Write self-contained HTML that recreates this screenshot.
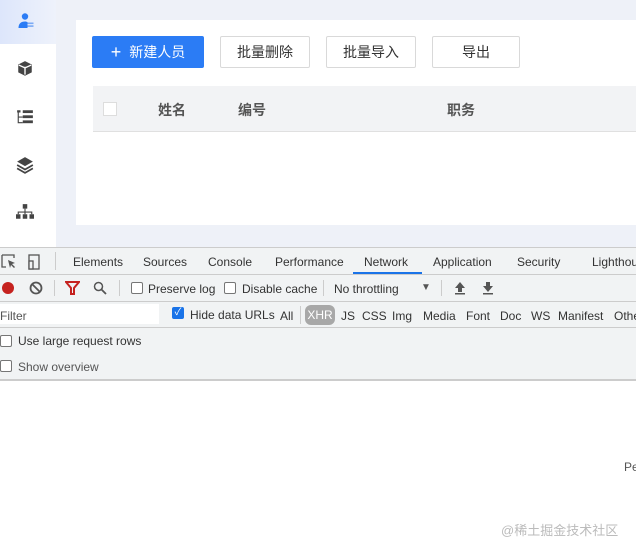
<!DOCTYPE html>
<html><head><meta charset="utf-8"><style>
*{box-sizing:border-box;margin:0;padding:0}
body{width:636px;height:551px;overflow:hidden;position:relative;background:#fff;font-family:"Liberation Sans","Noto Sans CJK SC",sans-serif;}
.abs{position:absolute}
.cj{font-family:"Liberation Sans","Noto Sans CJK SC",sans-serif}
.btn{position:absolute;top:36px;height:32px;border:1px solid #d9d9d9;background:#fff;font-size:14px;color:#333;display:flex;align-items:center;justify-content:center;border-radius:2px}
.dt{font-size:12px;color:#333;position:absolute}
.cb{position:absolute;width:12px;height:12px;border:1px solid #767676;border-radius:2px;background:#fff}
</style></head><body>
<div class="abs" style="left:0;top:0;width:636px;height:247px;background:#eef1f8"></div>
<div class="abs" style="left:0;top:0;width:56px;height:247px;background:#fff"></div>
<div class="abs" style="left:0;top:0;width:56px;height:44px;background:linear-gradient(90deg,#dde6fb,#eef2fb)"></div>
<svg class="abs" style="left:16px;top:12px" width="20" height="20" viewBox="0 0 20 20"><circle cx="9" cy="4.5" r="3.2" fill="#2b7cf5"/><path d="M2.5 16c0-4.5 2.5-6.5 6.5-6.5 1 0 2 .3 2.5.7V16z" fill="#2b7cf5"/><rect x="11.5" y="10.5" width="6" height="1.6" fill="#7aaaf5"/><rect x="11.5" y="13.3" width="6" height="1.6" fill="#7aaaf5"/></svg>
<svg class="abs" style="left:16px;top:60px" width="18" height="18" viewBox="0 0 16 16"><path d="M8 1l6 3v7l-6 3-6-3V4z" fill="#444"/><path d="M8 6v7M2.5 4.5L8 7l5.5-2.5" stroke="#fff" stroke-width="1.2" fill="none"/></svg>
<svg class="abs" style="left:16px;top:109px" width="18" height="16" viewBox="0 0 16 14"><rect x="1" y="1" width="3" height="2" fill="#444"/><rect x="6" y="1" width="9" height="2.5" fill="#444"/><rect x="6" y="5.5" width="9" height="2.5" fill="#444"/><rect x="6" y="10" width="9" height="2.5" fill="#444"/><path d="M2 3v9h4M2 7h4" stroke="#444" fill="none"/></svg>
<svg class="abs" style="left:16px;top:156px" width="18" height="18" viewBox="0 0 16 16"><path d="M8 1l7 4-7 4-7-4z" fill="#444"/><path d="M1 8l7 4 7-4M1 11l7 4 7-4" stroke="#444" stroke-width="1.5" fill="none"/></svg>
<svg class="abs" style="left:16px;top:204px" width="18" height="16" viewBox="0 0 16 14"><rect x="6" y="0" width="4" height="4" fill="#444"/><rect x="0" y="9" width="4" height="4" fill="#444"/><rect x="6" y="9" width="4" height="4" fill="#444"/><rect x="12" y="9" width="4" height="4" fill="#444"/><path d="M8 4v5M2 9V7h12v2" stroke="#444" fill="none"/></svg>
<div class="abs" style="left:76px;top:20px;width:560px;height:205px;background:#fff"></div>
<div class="btn" style="left:92px;width:112px;background:#2b7cf5;border-color:#2b7cf5;color:#fff"><span style="font-size:18px;margin-right:8px;font-weight:300">+</span>新建人员</div>
<div class="btn" style="left:220px;width:90px">批量删除</div>
<div class="btn" style="left:326px;width:90px">批量导入</div>
<div class="btn" style="left:432px;width:88px">导出</div>
<div class="abs" style="left:93px;top:86px;width:543px;height:46px;background:#f2f3f5;border-bottom:1px solid #e0e0e0"></div>
<div class="abs" style="left:103px;top:102px;width:14px;height:14px;border:1px solid #ddd;background:#fff"></div>
<div class="abs" style="left:158px;top:100px;font-size:14px;color:#555;font-weight:bold">姓名</div>
<div class="abs" style="left:238px;top:100px;font-size:14px;color:#555;font-weight:bold">编号</div>
<div class="abs" style="left:447px;top:100px;font-size:14px;color:#555;font-weight:bold">职务</div>
<div class="abs" style="left:0;top:247px;width:636px;height:134px;background:#f1f3f4;border-top:1px solid #ccc;border-bottom:2px solid #ccc"></div>
<div class="abs" style="left:0;top:274px;width:636px;height:1px;background:#ccc"></div>
<div class="abs" style="left:0;top:301px;width:636px;height:1px;background:#ccc"></div>
<div class="abs" style="left:0;top:327px;width:636px;height:1px;background:#ccc"></div>
<svg class="abs" style="left:1px;top:253px" width="40" height="18" viewBox="0 0 40 18"><path d="M1 2h12v3M1 2v12h4" stroke="#555" fill="none" stroke-width="1.3"/><path d="M7 7l7 3-3 1 3 3-1 1-3-3-1 3z" fill="#555"/><rect x="28" y="2" width="10" height="14" stroke="#555" fill="none" stroke-width="1.3"/><rect x="28" y="8" width="4" height="8" stroke="#555" fill="#f1f3f4" stroke-width="1.3"/></svg>
<div class="abs" style="left:55px;top:252px;width:1px;height:18px;background:#ccc"></div>
<div class="dt" style="left:73px;top:255px">Elements</div>
<div class="dt" style="left:143px;top:255px">Sources</div>
<div class="dt" style="left:208px;top:255px">Console</div>
<div class="dt" style="left:275px;top:255px">Performance</div>
<div class="dt" style="left:364px;top:255px">Network</div>
<div class="abs" style="left:353px;top:272px;width:69px;height:2px;background:#1a73e8"></div>
<div class="dt" style="left:433px;top:255px">Application</div>
<div class="dt" style="left:517px;top:255px">Security</div>
<div class="dt" style="left:592px;top:255px">Lighthouse</div>
<div class="abs" style="left:2px;top:282px;width:12px;height:12px;border-radius:50%;background:#c5221f"></div>
<svg class="abs" style="left:29px;top:281px" width="14" height="14" viewBox="0 0 14 14"><circle cx="7" cy="7" r="5.5" stroke="#555" stroke-width="1.8" fill="none"/><path d="M3 3l8 8" stroke="#555" stroke-width="1.8"/></svg>
<div class="abs" style="left:54px;top:280px;width:1px;height:16px;background:#ccc"></div>
<svg class="abs" style="left:65px;top:281px" width="15" height="14" viewBox="0 0 15 14"><path d="M1 1h13L9 7v6H6V7z" fill="none" stroke="#c5221f" stroke-width="2"/></svg>
<svg class="abs" style="left:93px;top:281px" width="14" height="14" viewBox="0 0 14 14"><circle cx="5.5" cy="5.5" r="4" stroke="#555" stroke-width="1.5" fill="none"/><path d="M8.5 8.5l4.5 4.5" stroke="#555" stroke-width="1.8"/></svg>
<div class="abs" style="left:119px;top:280px;width:1px;height:16px;background:#ccc"></div>
<div class="cb" style="left:131px;top:282px"></div><div class="dt" style="left:148px;top:282px">Preserve log</div>
<div class="cb" style="left:224px;top:282px"></div><div class="dt" style="left:242px;top:282px">Disable cache</div>
<div class="abs" style="left:323px;top:280px;width:1px;height:16px;background:#ccc"></div>
<div class="dt" style="left:334px;top:282px">No throttling</div>
<div class="dt" style="left:421px;top:282px;font-size:10px;color:#555">▼</div>
<div class="abs" style="left:441px;top:280px;width:1px;height:16px;background:#ccc"></div>
<svg class="abs" style="left:453px;top:281px" width="14" height="14" viewBox="0 0 14 14"><path d="M7 1l5 6H9v4H5V7H2z" fill="#555"/><rect x="2" y="12" width="10" height="1.5" fill="#555"/></svg>
<svg class="abs" style="left:481px;top:281px" width="14" height="14" viewBox="0 0 14 14"><path d="M7 11l5-6H9V1H5v4H2z" fill="#555"/><rect x="2" y="12" width="10" height="1.5" fill="#555"/></svg>
<div class="abs" style="left:0;top:304px;width:159px;height:20px;background:#fff"></div>
<div class="dt" style="left:0;top:309px;color:#555">Filter</div>
<div class="abs" style="left:172px;top:307px;width:12px;height:12px;background:#1a73e8;border-radius:2px;color:#fff;font-size:10px;line-height:12px;text-align:center">✓</div>
<div class="dt" style="left:190px;top:308px">Hide data URLs</div>
<div class="dt" style="left:280px;top:309px">All</div>
<div class="abs" style="left:300px;top:306px;width:1px;height:18px;background:#ccc"></div>
<div class="abs" style="left:305px;top:305px;width:30px;height:20px;background:#a8a8a8;border-radius:6px;color:#fff;font-size:12px;line-height:20px;text-align:center">XHR</div>
<div class="dt" style="left:341px;top:309px">JS</div>
<div class="dt" style="left:362px;top:309px">CSS</div>
<div class="dt" style="left:392px;top:309px">Img</div>
<div class="dt" style="left:423px;top:309px">Media</div>
<div class="dt" style="left:466px;top:309px">Font</div>
<div class="dt" style="left:500px;top:309px">Doc</div>
<div class="dt" style="left:531px;top:309px">WS</div>
<div class="dt" style="left:558px;top:309px">Manifest</div>
<div class="dt" style="left:614px;top:309px">Other</div>
<div class="cb" style="left:0;top:335px"></div><div class="dt" style="left:18px;top:334px">Use large request rows</div>
<div class="cb" style="left:0;top:360px"></div><div class="dt" style="left:18px;top:360px;color:#555">Show overview</div>
<div class="dt" style="left:624px;top:460px;color:#555">Pe</div>
<div class="abs cj" style="left:501px;top:520px;font-size:13px;color:#bbb">@稀土掘金技术社区</div>
</body></html>
